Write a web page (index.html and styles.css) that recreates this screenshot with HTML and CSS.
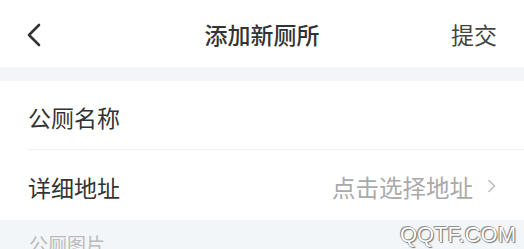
FILE: index.html
```html
<!DOCTYPE html>
<html lang="zh-CN">
<head>
<meta charset="utf-8">
<link rel="stylesheet" href="styles.css">
</head>
<body>
<div class="page">
  <header class="nav">
    <div class="nav-left">
      <svg class="back" width="18" height="24" viewBox="0 0 18 24"><path d="M14 2 L4 12 L14 22" fill="none" stroke="#333" stroke-width="2.6" stroke-linecap="round" stroke-linejoin="round"/></svg>
    </div>
    <div class="nav-title">添加新厕所</div>
    <div class="nav-right">提交</div>
  </header>
  <div class="band"></div>
  <section class="form">
    <div class="row row-first">
      <span class="label">公厕名称</span>
    </div>
    <div class="divider"></div>
    <div class="row row-second">
      <span class="label">详细地址</span>
      <span class="value">点击选择地址
        <svg class="arrow" width="10" height="14" viewBox="0 0 10 14"><path d="M2 1.5 L7.5 7 L2 12.5" fill="none" stroke="#bdbdbd" stroke-width="1.6" stroke-linecap="round" stroke-linejoin="round"/></svg>
      </span>
    </div>
  </section>
  <section class="section">
    <div class="section-title">公厕图片</div>
  </section>
  <div class="watermark">QQTF.COM</div>
</div>
</body>
</html>
```
FILE: styles.css
```css
html, body {
  margin: 0;
  padding: 0;
  background: #ffffff;
}
body {
  font-family: "Noto Sans CJK SC", "Noto Sans", sans-serif;
  width: 524px;
  height: 249px;
  overflow: hidden;
}
.page {
  position: relative;
  width: 524px;
  height: 249px;
  overflow: hidden;
}
.nav {
  height: 67px;
  display: flex;
  align-items: center;
  justify-content: space-between;
  padding: 0 27px 0 25px;
  box-sizing: border-box;
}
.nav-left {
  width: 60px;
  display: flex;
  align-items: center;
}
.back {
  display: block;
  margin-top: 2px;
}
.nav-title {
  font-size: 23px;
  line-height: 30px;
  color: #333333;
  font-weight: 500;
  margin-left: 2px;
}
.nav-right {
  width: 60px;
  text-align: right;
  font-size: 23px;
  line-height: 30px;
  color: #444444;
}
.band {
  height: 14px;
  background: #f3f6f9;
}
.form {
  background: #ffffff;
}
.row {
  display: flex;
  align-items: center;
  justify-content: space-between;
  padding: 0 27px 0 28px;
}
.row-first {
  height: 68px;
}
.row-second {
  height: 70px;
}
.label {
  font-size: 23px;
  line-height: 30px;
  color: #333333;
  padding-top: 3px;
}
.value {
  display: flex;
  align-items: center;
  gap: 14px;
  font-size: 23.5px;
  line-height: 30px;
  color: #aaaaaa;
  padding-top: 3px;
}
.arrow {
  display: block;
  margin-top: -2px;
}
.divider {
  height: 1px;
  background: #f1f1f1;
  margin-left: 27px;
}
.section {
  background: #f3f6f9;
  height: 60px;
  padding: 11px 28px 0 29px;
  box-sizing: border-box;
}
.section-title {
  font-size: 19px;
  line-height: 26px;
  color: #bbbbbb;
}
.watermark {
  position: absolute;
  right: 8px;
  top: 222px;
  font-family: "Liberation Sans", Arial, sans-serif;
  font-size: 22px;
  line-height: 26px;
  color: #ffffff;
  letter-spacing: 0;
  text-shadow: 0 0 1px #555, 1px 1px 1px #777, -1px -1px 0 #999;
}
```
